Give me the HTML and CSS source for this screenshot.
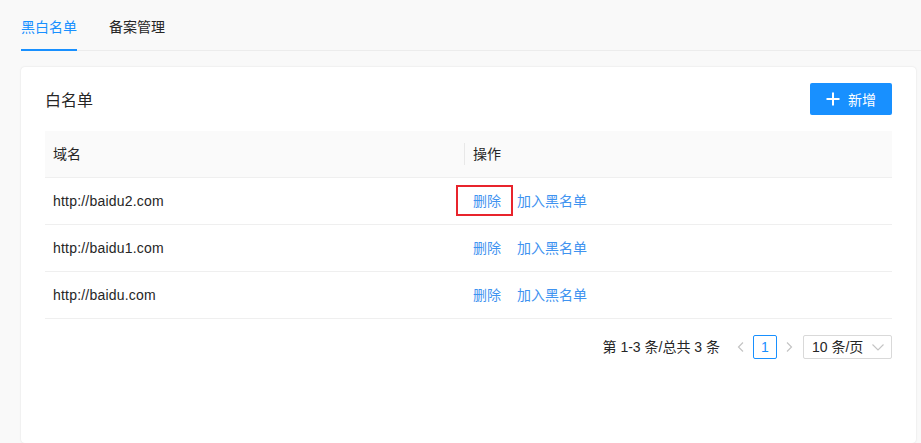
FILE: index.html
```html
<!DOCTYPE html>
<html lang="zh-CN">
<head>
<meta charset="utf-8">
<title>黑白名单</title>
<link rel="stylesheet" href="styles.css">
</head>
<body>
<div class="page">
  <nav class="tabs">
    <div class="tab active">黑白名单</div>
    <div class="tab">备案管理</div>
  </nav>
  <section class="card">
    <header class="card-head">
      <h2 class="card-title">白名单</h2>
      <button class="btn-primary" type="button">
        <svg class="plus" viewBox="0 0 14 14" width="14" height="14" aria-hidden="true"><path d="M7 0.5v13M0.5 7h13" stroke="#fff" stroke-width="2" fill="none"/></svg>
        <span>新增</span>
      </button>
    </header>
    <table class="table">
      <thead>
        <tr><th class="col-domain">域名</th><th class="col-op"><span class="th-sep"></span>操作</th></tr>
      </thead>
      <tbody>
        <tr><td>http://baidu2.com</td><td><span class="actions"><a class="link marked">删除</a><a class="link">加入黑名单</a></span></td></tr>
        <tr><td>http://baidu1.com</td><td><span class="actions"><a class="link">删除</a><a class="link">加入黑名单</a></span></td></tr>
        <tr><td>http://baidu.com</td><td><span class="actions"><a class="link">删除</a><a class="link">加入黑名单</a></span></td></tr>
      </tbody>
    </table>
    <div class="pagination">
      <span class="total">第 1-3 条/总共 3 条</span>
      <span class="pg-item arrow"><svg viewBox="0 0 12 12" width="12" height="12"><path d="M8 1.5L3.5 6 8 10.5" stroke="#c4c4c4" stroke-width="1.2" fill="none"/></svg></span>
      <span class="pg-item current">1</span>
      <span class="pg-item arrow"><svg viewBox="0 0 12 12" width="12" height="12"><path d="M4 1.5L8.5 6 4 10.5" stroke="#c4c4c4" stroke-width="1.2" fill="none"/></svg></span>
      <span class="size-select">10 条/页<svg viewBox="0 0 14 14" width="14" height="14"><path d="M1.5 4.5l5.5 5.5 5.5-5.5" stroke="#c4c4c4" stroke-width="1.1" fill="none"/></svg></span>
    </div>
  </section>
</div>
</body>
</html>
```
FILE: styles.css
```css
* { box-sizing: border-box; }
html, body { margin: 0; padding: 0; }
body {
  background: #f9f9f9;
  font-family: "Liberation Sans", "Noto Sans CJK SC", sans-serif;
  font-size: 14px;
  color: #262626;
  overflow: hidden;
}
.page {
  height: 443px;
  display: flex;
  flex-direction: column;
}
.tabs {
  margin-left: 21px;
  padding-top: 4px;
  display: flex;
  gap: 32px;
  border-bottom: 1px solid #ececec;
}
.tab {
  position: relative;
  padding: 12px 0;
  line-height: 22px;
  color: #262626;
}
.tab.active { color: #1890ff; }
.tab.active::after {
  content: "";
  position: absolute;
  left: 0; right: 0; bottom: -1px;
  height: 2px;
  background: #1890ff;
}
.card {
  margin: 16px 5px 0 21px;
  flex: 1;
  background: #fff;
  border-radius: 4px;
  box-shadow: 0 0 2px rgba(0,0,0,0.12);
  padding: 16px 24px 24px;
}
.card-head {
  display: flex;
  align-items: center;
  justify-content: space-between;
  height: 32px;
  margin-bottom: 16px;
}
.card-title {
  margin: 0;
  font-size: 16px;
  font-weight: 400;
  color: #262626;
}
.btn-primary {
  display: flex;
  align-items: center;
  gap: 8px;
  height: 32px;
  padding: 0 16px;
  border: 0;
  border-radius: 2px;
  background: #1890ff;
  color: #fff;
  font: inherit;
  font-size: 14px;
}
.table {
  width: 100%;
  border-collapse: collapse;
  table-layout: fixed;
}
.table th, .table td {
  padding: 12px 8px;
  line-height: 22px;
  text-align: left;
  border-bottom: 1px solid #efefef;
}
.table td { letter-spacing: 0.2px; }
.table th {
  background: #fafafa;
  font-weight: 400;
  color: #262626;
}
.col-domain { width: 420px; }
.col-op { position: relative; }
.th-sep {
  position: absolute;
  left: -1px; top: 12px;
  width: 1px; height: 22px;
  background: #e8e8e8;
}
.actions { display: inline-flex; gap: 16px; letter-spacing: 0; }
.link { color: #3f93f0; cursor: pointer; }
.link.marked { position: relative; }
.link.marked::after {
  content: "";
  position: absolute;
  left: -17px; right: -12px; top: -5px; bottom: -4px;
  border: 2px solid #e8242c;
}
.pagination {
  margin-top: 16px;
  display: flex;
  justify-content: flex-end;
  align-items: center;
  height: 24px;
}
.total { margin-right: 9px; line-height: 24px; }
.pg-item {
  width: 24px;
  height: 24px;
  display: flex;
  align-items: center;
  justify-content: center;
  line-height: 22px;
}
.pg-item.current {
  border: 1px solid #1890ff;
  border-radius: 2px;
  color: #1890ff;
}
.size-select {
  margin-left: 2px;
  width: 89px;
  height: 24px;
  border: 1px solid #d9d9d9;
  border-radius: 2px;
  display: flex;
  align-items: center;
  justify-content: space-between;
  padding: 0 6px 0 8px;
  line-height: 22px;
}
```
